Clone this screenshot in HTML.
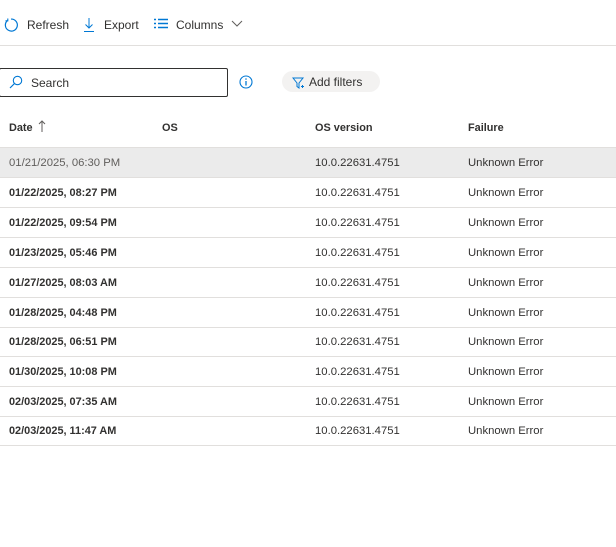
<!DOCTYPE html>
<html><head><style>
body{margin:0;width:616px;height:547px;background:#fff;font-family:"Liberation Sans",sans-serif;font-size:11.3px;color:#323130;position:relative;overflow:hidden}
.a{position:absolute;white-space:nowrap}
.row{position:absolute;left:0;width:616px;height:29px;border-bottom:1px solid #e1dfdd}
.row span{position:absolute;top:9px}
.d{left:9px;font-weight:bold;font-size:10.9px}
.v{left:315px}
.f{left:468px}
.t{font-size:12px}
</style></head><body>
<div class="a" style="left:0;top:0;width:616px;height:45px;border-bottom:1px solid #e1dfdd"></div>
<svg class="a" style="left:4px;top:17px" width="16" height="16" viewBox="0 0 16 16"><path d="M3.5 3.5A6 6 0 1 0 7 2.1" fill="none" stroke="#0078d4" stroke-width="1.2"/><path d="M1.5 3.8h2.3V1.5" fill="none" stroke="#0078d4" stroke-width="1.1"/></svg>
<span class="a t" style="left:27px;top:18px">Refresh</span>
<svg class="a" style="left:82px;top:17px" width="14" height="16" viewBox="0 0 14 16"><path d="M7 1v10M3.5 7.5L7 11l3.5-3.5M2 14.5h10" fill="none" stroke="#0078d4" stroke-width="1"/></svg>
<span class="a t" style="left:104px;top:18px">Export</span>
<svg class="a" style="left:154px;top:18px" width="14" height="12" viewBox="0 0 14 12"><path d="M0 1.5h2M4 1.5h10M0 5.5h2M4 5.5h10M0 9.5h2M4 9.5h10" stroke="#0078d4" stroke-width="1.4"/></svg>
<span class="a t" style="left:176px;top:18px">Columns</span>
<svg class="a" style="left:231px;top:20px" width="12" height="8" viewBox="0 0 12 8"><path d="M1 1l5 5 5-5" fill="none" stroke="#605e5c" stroke-width="1"/></svg>
<div class="a" style="left:-1px;top:68px;width:227px;height:27px;border:1px solid #323130;border-radius:2px"></div>
<svg class="a" style="left:9px;top:75px" width="14" height="14" viewBox="0 0 14 14"><circle cx="8.5" cy="5.5" r="4.2" fill="none" stroke="#0078d4" stroke-width="1.1"/><path d="M5.5 8.5L1 13" stroke="#0078d4" stroke-width="1.2"/></svg>
<span class="a t" style="left:31px;top:76px;color:#323130">Search</span>
<svg class="a" style="left:239px;top:75px" width="14" height="14" viewBox="0 0 14 14"><circle cx="7" cy="7" r="6" fill="none" stroke="#0078d4" stroke-width="1.1"/><path d="M7 6v4.5" stroke="#0078d4" stroke-width="1.3"/><circle cx="7" cy="4" r=".8" fill="#0078d4"/></svg>
<div class="a" style="left:282px;top:71px;width:98px;height:21px;background:#f3f2f1;border-radius:11px"></div>
<svg class="a" style="left:292px;top:77px" width="13" height="13" viewBox="0 0 13 13"><path d="M1 1h10L7 6v5L5 9.5V6z" fill="none" stroke="#0078d4" stroke-width="1"/><path d="M9 9.5h3M10.5 8v3" stroke="#0078d4" stroke-width="1"/></svg>
<span class="a t" style="left:309px;top:75px">Add filters</span>
<span class="a" style="left:9px;top:122px;font-weight:bold;font-size:10.9px">Date</span>
<svg class="a" style="left:38px;top:120px" width="8" height="13" viewBox="0 0 8 13"><path d="M4 1v11M1 4l3-3 3 3" fill="none" stroke="#605e5c" stroke-width="1"/></svg>
<span class="a" style="left:162px;top:122px;font-weight:bold;font-size:10.9px">OS</span>
<span class="a" style="left:315px;top:122px;font-weight:bold;font-size:10.9px">OS version</span>
<span class="a" style="left:468px;top:122px;font-weight:bold;font-size:10.9px">Failure</span>
<div class="row" style="top:147px;background:#ebebeb;border-top:1px solid #e1dfdd"><span class="d" style="font-weight:normal;color:#605e5c;font-size:11.3px">01/21/2025, 06:30 PM</span><span class="v">10.0.22631.4751</span><span class="f">Unknown Error</span></div>
<div class="row" style="top:178px"><span class="d">01/22/2025, 08:27 PM</span><span class="v">10.0.22631.4751</span><span class="f">Unknown Error</span></div>
<div class="row" style="top:208px"><span class="d">01/22/2025, 09:54 PM</span><span class="v">10.0.22631.4751</span><span class="f">Unknown Error</span></div>
<div class="row" style="top:238px"><span class="d">01/23/2025, 05:46 PM</span><span class="v">10.0.22631.4751</span><span class="f">Unknown Error</span></div>
<div class="row" style="top:268px"><span class="d">01/27/2025, 08:03 AM</span><span class="v">10.0.22631.4751</span><span class="f">Unknown Error</span></div>
<div class="row" style="top:298px"><span class="d">01/28/2025, 04:48 PM</span><span class="v">10.0.22631.4751</span><span class="f">Unknown Error</span></div>
<div class="row" style="top:327px"><span class="d">01/28/2025, 06:51 PM</span><span class="v">10.0.22631.4751</span><span class="f">Unknown Error</span></div>
<div class="row" style="top:357px"><span class="d">01/30/2025, 10:08 PM</span><span class="v">10.0.22631.4751</span><span class="f">Unknown Error</span></div>
<div class="row" style="top:387px"><span class="d">02/03/2025, 07:35 AM</span><span class="v">10.0.22631.4751</span><span class="f">Unknown Error</span></div>
<div class="row" style="top:416px"><span class="d">02/03/2025, 11:47 AM</span><span class="v">10.0.22631.4751</span><span class="f">Unknown Error</span></div>
</body></html>
